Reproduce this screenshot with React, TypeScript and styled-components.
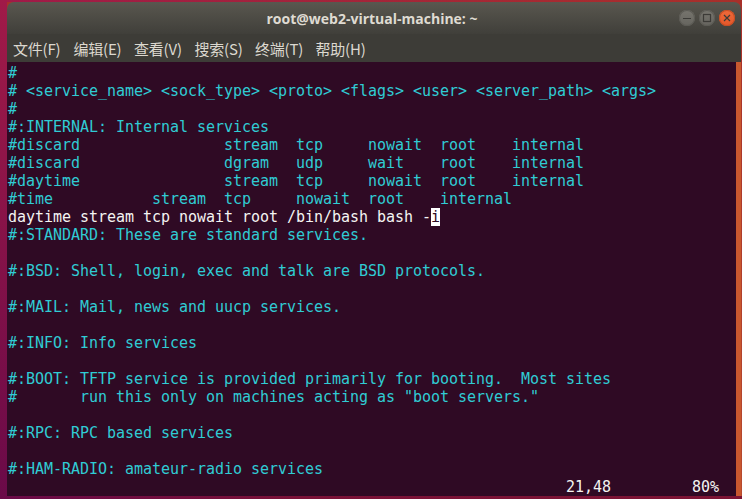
import styled, { createGlobalStyle } from 'styled-components'

const GlobalStyle = createGlobalStyle`
  html, body {
    margin: 0;
    padding: 0;
    width: 742px;
    height: 499px;
    overflow: hidden;
  }
`

const Desktop = styled.div`
  width: 742px;
  height: 499px;
  box-sizing: border-box;
  padding: 2px 1px 3px 7px;
  background:
    linear-gradient(90deg, #6a0a48 0%, #7a1238 40%, #7c1434 100%) bottom / 100% 3px no-repeat,
    linear-gradient(90deg, #a01a48 0%, #a8302a 100%) top / 100% 2px no-repeat,
    linear-gradient(180deg, #a01a48 0%, #6a0a48 100%) left / 7px 100% no-repeat,
    linear-gradient(180deg, #a8302a 0%, #b84a2e 100%);
`

const Window = styled.div`
  height: 100%;
  display: flex;
  flex-direction: column;
  border-radius: 7px 7px 0 0;
  overflow: hidden;
`

const TitleBar = styled.div`
  height: 32px;
  flex: none;
  display: flex;
  align-items: center;
  justify-content: flex-end;
  position: relative;
  padding-right: 6px;
  background: linear-gradient(180deg, #59574f 0%, #403f3a 100%);
`

const Title = styled.div`
  position: absolute;
  left: 0;
  right: 4px;
  text-align: center;
  font: bold 14px 'Open Sans', 'Noto Sans', sans-serif;
  color: #dfdbd2;
`

const Controls = styled.div`
  display: flex;
  gap: 4px;
`

const Control = styled.div<{ $close?: boolean }>`
  width: 16px;
  height: 16px;
  border-radius: 50%;
  display: flex;
  align-items: center;
  justify-content: center;
  background: ${(p) =>
    p.$close
      ? 'linear-gradient(180deg, #ee6a3a, #e4572a)'
      : 'linear-gradient(180deg, #77756e, #65645e)'};
  box-shadow: inset 0 0 0 1px ${(p) => (p.$close ? '#c74d23' : '#5c5b55')};
`

const MenuBar = styled.div`
  height: 28px;
  flex: none;
  display: flex;
  align-items: center;
  padding-left: 6px;
  background: #3d3c37;
`

const MenuItem = styled.div`
  width: 60.5px;
  font: 15px 'Noto Sans CJK SC', 'Noto Sans', sans-serif;
  letter-spacing: -0.2px;
  color: #dcd8cf;
  white-space: nowrap;
`

const Body = styled.div`
  flex: 1;
  display: flex;
  min-height: 0;
`

const Terminal = styled.pre`
  flex: 1;
  margin: 0;
  padding: 2px 0 0 1px;
  background: #2f0a24;
  font: 15px/18px 'DejaVu Sans Mono', monospace;
  letter-spacing: -0.03px;
`

const Scrollbar = styled.div`
  width: 5px;
  flex: none;
  background: #c8582f;
`

const Line = styled.div<{ $tone?: 'comment' | 'plain' }>`
  height: 18px;
  color: ${(p) => (p.$tone === 'plain' ? '#f4f4f2' : '#30ccd4')};
`

const Cursor = styled.span`
  background: #fff;
  color: #2f0a24;
`

const lines = [
  '#',
  '# <service_name> <sock_type> <proto> <flags> <user> <server_path> <args>',
  '#',
  '#:INTERNAL: Internal services',
  '#discard                stream  tcp     nowait  root    internal',
  '#discard                dgram   udp     wait    root    internal',
  '#daytime                stream  tcp     nowait  root    internal',
  '#time           stream  tcp     nowait  root    internal',
]

const rest = [
  '#:STANDARD: These are standard services.',
  '',
  '#:BSD: Shell, login, exec and talk are BSD protocols.',
  '',
  '#:MAIL: Mail, news and uucp services.',
  '',
  '#:INFO: Info services',
  '',
  '#:BOOT: TFTP service is provided primarily for booting.  Most sites',
  '#       run this only on machines acting as "boot servers."',
  '',
  '#:RPC: RPC based services',
  '',
  '#:HAM-RADIO: amateur-radio services',
]

const menus = ['文件(F)', '编辑(E)', '查看(V)', '搜索(S)', '终端(T)', '帮助(H)']

export default function App() {
  return (
    <>
      <GlobalStyle />
      <Desktop>
        <Window>
          <TitleBar>
            <Title>root@web2-virtual-machine: ~</Title>
            <Controls>
              <Control>
                <svg width="10" height="10" viewBox="0 0 10 10">
                  <path d="M1 5.5h8" stroke="#3c3b37" strokeWidth="1.2" />
                </svg>
              </Control>
              <Control>
                <svg width="10" height="10" viewBox="0 0 10 10">
                  <rect x="1.5" y="1.5" width="7" height="7" fill="none" stroke="#3c3b37" strokeWidth="1.2" />
                </svg>
              </Control>
              <Control $close>
                <svg width="10" height="10" viewBox="0 0 10 10">
                  <path d="M2 2l6 6M8 2l-6 6" stroke="#3c3b37" strokeWidth="1.2" />
                </svg>
              </Control>
            </Controls>
          </TitleBar>
          <MenuBar>
            {menus.map((m) => (
              <MenuItem key={m}>{m}</MenuItem>
            ))}
          </MenuBar>
          <Body>
            <Terminal>
              {lines.map((l, i) => (
                <Line key={i}>{l}</Line>
              ))}
              <Line $tone="plain">
                daytime stream tcp nowait root /bin/bash bash -<Cursor>i</Cursor>
              </Line>
              {rest.map((l, i) => (
                <Line key={i}>{l}</Line>
              ))}
              <Line $tone="plain">{' '.repeat(62)}21,48{' '.repeat(9)}80%</Line>
            </Terminal>
            <Scrollbar />
          </Body>
        </Window>
      </Desktop>
    </>
  )
}
